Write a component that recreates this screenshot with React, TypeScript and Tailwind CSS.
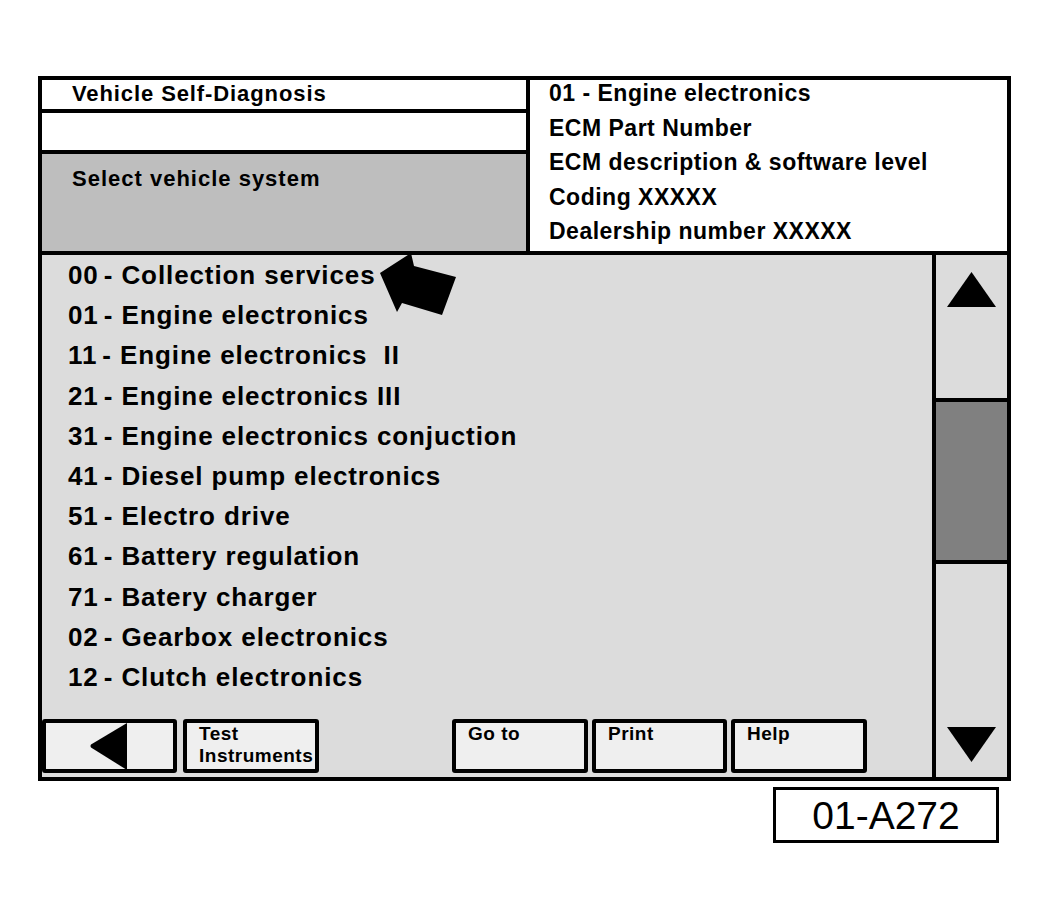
const systems = [
  ["00", "Collection services"],
  ["01", "Engine electronics"],
  ["11", "Engine electronics  II"],
  ["21", "Engine electronics III"],
  ["31", "Engine electronics conjuction"],
  ["41", "Diesel pump electronics"],
  ["51", "Electro drive"],
  ["61", "Battery regulation"],
  ["71", "Batery charger"],
  ["02", "Gearbox electronics"],
  ["12", "Clutch electronics"],
];

const ecuInfo = [
  "01 - Engine electronics",
  "ECM Part Number",
  "ECM description & software level",
  "Coding XXXXX",
  "Dealership number XXXXX",
];

function SoftKey({ label, className }: { label?: string; className: string }) {
  return (
    <div
      className={`h-[54px] border-4 border-black rounded-[3px] bg-[#efefef] pl-[12px] text-[19px] leading-[22px] tracking-[0.5px] font-bold whitespace-pre-line ${className}`}
    >
      {label}
    </div>
  );
}

export default function App() {
  return (
    <div className="w-[1050px] h-[920px] bg-white text-black font-['Liberation_Sans',Arial,sans-serif] pt-[76px] pl-[38px]">
      <div className="relative w-[973px] h-[705px] border-4 border-black flex flex-col">
        {/* header */}
        <div className="h-[175px] flex border-b-4 border-black">
          <div className="w-[488px] flex flex-col border-r-4 border-black">
            <div className="h-[33px] border-b-4 border-black bg-white pl-[30px] text-[22px] leading-[28px] tracking-[0.9px] font-bold">
              Vehicle Self-Diagnosis
            </div>
            <div className="h-[41px] border-b-4 border-black bg-white" />
            <div className="flex-1 bg-[#bebebe] pl-[30px] pt-[10px] text-[22px] leading-[29px] tracking-[1px] font-bold">
              Select vehicle system
            </div>
          </div>
          <div className="flex-1 bg-white pl-[19px] overflow-hidden">
            <div className="-mt-[4px] text-[23px] leading-[34.6px] tracking-[0.5px] font-bold">
              {ecuInfo.map((line) => (
                <div key={line}>{line}</div>
              ))}
            </div>
          </div>
        </div>

        {/* list + scrollbar */}
        <div className="flex-1 flex">
          <div className="w-[894px] border-r-4 border-black bg-[#dcdcdc] flex flex-col">
            <div className="pl-[26px] text-[26px] leading-[40.2px] tracking-[0.9px] font-bold">
              {systems.map(([num, name]) => (
                <div key={num} className="whitespace-pre">
                  <span>{num}</span>
                  <span className="ml-[5px]">- {name}</span>
                </div>
              ))}
            </div>
            <div className="mt-auto mb-[4px] flex">
              <div className="w-[135px] h-[54px] border-4 border-black rounded-[3px] bg-[#efefef]">
                <svg width="127" height="46" viewBox="0 0 127 46">
                  <path d="M45 21.5 Q44 23 45 24.5 L81 47 L81 0 Z" fill="black" />
                </svg>
              </div>
              <SoftKey label={"Test\nInstruments"} className="w-[136px] ml-[6px]" />
              <SoftKey label="Go to" className="w-[136px] ml-[133px]" />
              <SoftKey label="Print" className="w-[135px] ml-[4px]" />
              <SoftKey label="Help" className="w-[136px] ml-[4px]" />
            </div>
          </div>
          <div className="flex-1 flex flex-col">
            <div className="h-[147px] border-b-4 border-black bg-[#dcdcdc] pt-[17px] flex justify-center">
              <svg width="49" height="35" viewBox="0 0 49 35">
                <path d="M0 35 L24.5 0 L49 35 Z" fill="black" />
              </svg>
            </div>
            <div className="h-[162px] border-b-4 border-black bg-[#808080]" />
            <div className="flex-1 bg-[#dcdcdc] flex flex-col justify-end items-center pb-[15px]">
              <svg width="49" height="35" viewBox="0 0 49 35">
                <path d="M0 0 L49 0 L24.5 35 Z" fill="black" />
              </svg>
            </div>
          </div>
        </div>

        {/* pointer arrow */}
        <svg
          className="absolute left-[336px] top-[172px]"
          width="80"
          height="64"
          viewBox="0 0 80 64"
        >
          <path d="M33 1 L2 21 L19 60 L24 51 L64 63 L78 25 L36 14 Z" fill="black" />
        </svg>
      </div>

      <div className="mt-[6px] ml-[735px] w-[226px] h-[56px] border-[3px] border-black flex items-center justify-center text-[39px] leading-none">
        01-A272
      </div>
    </div>
  );
}
